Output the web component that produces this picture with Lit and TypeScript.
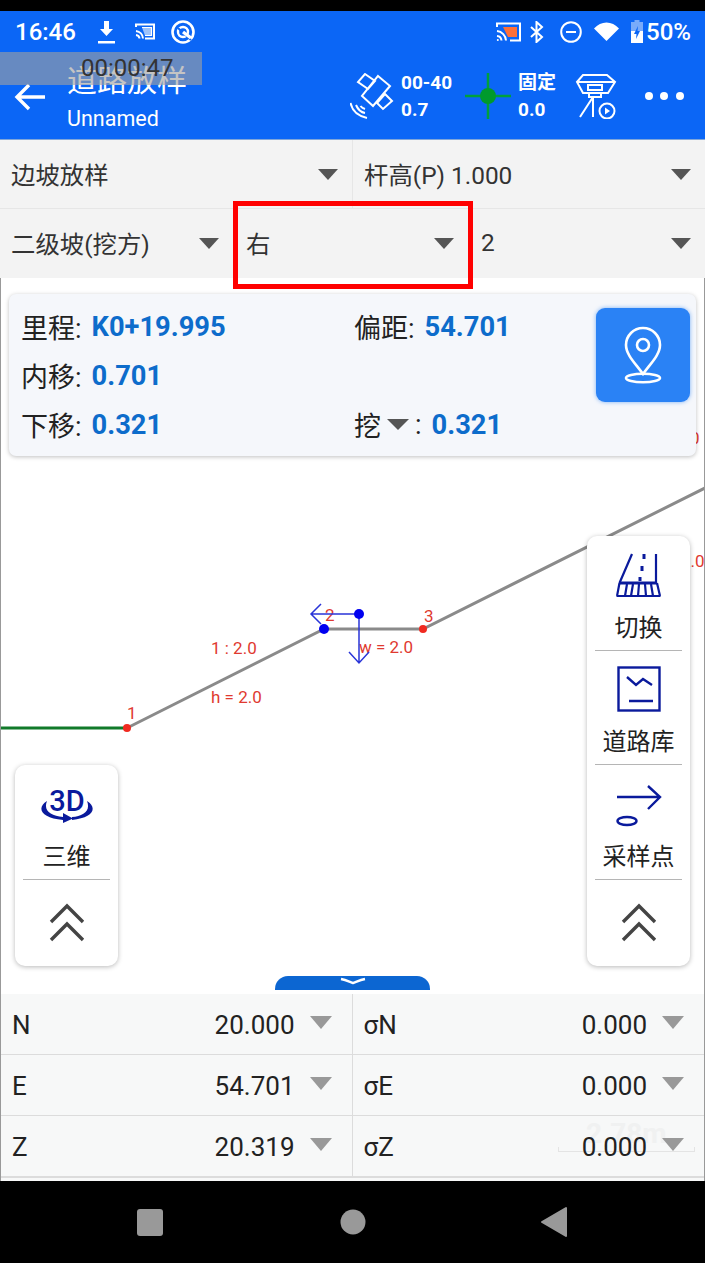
import { LitElement, css, html, svg } from 'lit';
import { customElement } from 'lit/decorators.js';

const caret = html`<span class="caret"></span>`;

const chevrons = html`<svg class="chevrons" width="36" height="40" viewBox="0 0 36 40">
  <path d="M2 19 18 3l16 16M2 37l16-16 16 16" fill="none" stroke="#444" stroke-width="3.4" />
</svg>`;

const roadIcon = html`<svg width="46" height="46" viewBox="0 0 46 46" fill="none" stroke="#0a1a9c" stroke-width="2.2">
  <path d="M16 2 3.500 31M40 2v29" />
  <path d="M28 2v5M26 14v5M24 25v4" stroke-width="3" />
  <path d="M3 31h38" stroke-width="3" />
  <path d="M1 44 3.500 31M41 31l3 13M.5 44h44" />
  <path d="M11 32 9 44M17 32l-2 12M23 32l-1 12M29 32l1 12M35 32l2 12" />
</svg>`;

const libIcon = html`<svg width="44" height="46" viewBox="0 0 44 46" fill="none" stroke="#0a1a9c" stroke-width="2.4">
  <rect x="1.500" y="1.500" width="41" height="43" />
  <path d="M10 11l9 8 7-6 9 6M12 35h24" />
</svg>`;

const sampleIcon = html`<svg width="46" height="42" viewBox="0 0 46 42" fill="none" stroke="#0a1a9c" stroke-width="2.4">
  <path d="M1 12h43M32 1l12 11-12 12" />
  <ellipse cx="11" cy="36" rx="9.500" ry="4" />
</svg>`;

const threeDIcon = html`<svg width="56" height="40" viewBox="0 0 56 40">
  <text x="28" y="24" text-anchor="middle" class="three-d">3D</text>
  <path d="M8 14C-3 21 2 31 24 33l0-3C12 29 4 24 8 14z" fill="#0a1a9c" />
  <path d="M48 14c11 7 6 17-15 19l0-3c11-1 19-6 15-16z" fill="#0a1a9c" />
  <path d="M24 26l10 5.500L24 36z" fill="#0a1a9c" />
</svg>`;

@customElement('app-root')
export class AppRoot extends LitElement {
  static styles = css`
    :host {
      display: block;
      width: 705px;
      height: 1263px;
      background: #000;
      font-family: Roboto, 'Noto Sans CJK SC', sans-serif;
      color: #222;
    }

    .page {
      position: relative;
      width: 705px;
      height: 1263px;
      display: flex;
      flex-direction: column;
      overflow: hidden;
    }

    .black-top {
      height: 11px;
      background: #000;
    }

    .header {
      height: 128px;
      background: #0b66f6;
      border-bottom: 1px solid #7fa6da;
      color: #fff;
    }

    .status {
      height: 41px;
      display: flex;
      align-items: center;
      padding: 0 14px 0 15px;
    }

    .status svg {
      display: block;
    }

    .time {
      font-size: 24px;
      font-weight: 500;
      width: 61px;
    }

    .s-dl {
      margin-left: 22px;
    }
    .s-cast {
      margin-left: 20px;
    }
    .s-ring {
      margin-left: 16px;
    }
    .s-right {
      margin-left: auto;
    }
    .s-bt {
      margin-left: 9px;
    }
    .s-dnd {
      margin-left: 16px;
    }
    .s-wifi {
      margin-left: 12px;
    }
    .s-batt {
      margin-left: 12px;
    }
    .pct {
      margin-left: 3px;
      font-size: 24px;
      font-weight: 500;
    }

    .appbar {
      height: 87px;
      display: flex;
      align-items: center;
      padding-left: 14px;
    }

    .back {
      display: block;
      margin-top: 2px;
    }

    .titles {
      flex: 1;
      margin-left: 22px;
      margin-top: 4px;
    }

    .title {
      font-size: 30px;
      line-height: 36px;
      height: 36px;
    }

    .subtitle {
      font-size: 21.500px;
      line-height: 28px;
      margin-top: 6px;
    }

    .sat {
      margin-right: 6px;
      display: block;
    }

    .fix-text {
      font-size: 19px;
      font-weight: 700;
      line-height: 27px;
      width: 51px;
      white-space: nowrap;
    }

    .cross {
      display: block;
      margin: 0 7px 0 13px;
    }

    .fix-text.narrow {
      width: 39px;
    }

    .receiver {
      display: block;
      margin-left: 18px;
    }

    .dots {
      display: block;
      margin: 0 21px 0 27px;
    }

    .row {
      display: flex;
      height: 68px;
      background: #f3f3f3;
      font-size: 24.400px;
      color: #333;
    }

    .row + .row {
      height: 69px;
      border-top: 1px solid #e6e6e6;
    }

    .cell {
      flex: 1;
      display: flex;
      align-items: center;
      justify-content: space-between;
      padding: 0 14px 0 11px;
      box-sizing: border-box;
      white-space: nowrap;
    }

    .cell > span:first-child {
      position: relative;
      top: -1px;
    }

    .cell.split {
      border-right: 1px solid #e6e6e6;
    }

    .row.thirds .cell {
      flex: none;
      width: 235px;
      padding-left: 13px;
    }

    .row.thirds .cell:first-child {
      width: 233px;
      padding-left: 11px;
    }

    .row.thirds .cell:last-child {
      width: 237px;
      padding-left: 13px;
    }

    .caret {
      width: 0;
      height: 0;
      border-left: 10px solid transparent;
      border-right: 10px solid transparent;
      border-top: 11px solid #555;
      flex: none;
    }

    .main {
      position: relative;
      flex: 1;
      background: #fff;
      border-left: 1px solid #999;
      border-right: 1px solid #999;
      overflow: hidden;
    }

    .canvas {
      position: absolute;
      left: -1px;
      top: 0;
    }

    .canvas text {
      font-family: Roboto, sans-serif;
      fill: #e03a30;
      font-size: 17px;
    }

    .card {
      position: relative;
      margin: 16px 8px 0;
      height: 162px;
      background: #f5f7fb;
      border-radius: 7px;
      box-shadow: 0 1px 4px rgba(0, 0, 0, 0.25);
      box-sizing: border-box;
      padding: 8px 0 0 12px;
      display: grid;
      grid-template-columns: 333px 1fr;
      grid-auto-rows: 49px;
      align-items: center;
      font-size: 27px;
      color: #222;
    }

    .kv {
      display: flex;
      align-items: center;
      white-space: nowrap;
    }

    .kv b {
      margin-left: 10px;
      color: #0d6ccb;
      font-weight: 700;
      font-size: 27.300px;
    }

    .kv .mini {
      margin: 0 6px;
      border-left-width: 11px;
      border-right-width: 11px;
    }

    .locate {
      position: absolute;
      right: 6px;
      top: 14px;
      width: 94px;
      height: 94px;
      background: #2a82f5;
      border-radius: 9px;
      box-shadow: 0 0 4px rgba(42, 130, 245, 0.6);
      display: flex;
      align-items: center;
      justify-content: center;
    }

    .panel {
      position: absolute;
      width: 103px;
      background: #fff;
      border-radius: 10px;
      box-shadow: 0 1px 5px rgba(0, 0, 0, 0.28);
      box-sizing: border-box;
      padding: 0 8px;
      display: flex;
      flex-direction: column;
    }

    .panel.right {
      left: 586px;
      top: 258px;
      height: 430px;
    }

    .panel.left {
      left: 14px;
      top: 487px;
      height: 201px;
    }

    .tool {
      height: 114.500px;
      border-bottom: 1px solid #b5b5b5;
      box-sizing: border-box;
      display: flex;
      flex-direction: column;
      align-items: center;
      justify-content: flex-end;
      font-size: 24px;
      line-height: 32px;
      color: #222;
      padding-bottom: 6px;
      gap: 14px;
    }

    .tool svg {
      display: block;
    }

    .three-d {
      font-family: Roboto, sans-serif;
      font-size: 29px;
      font-weight: 500;
      fill: #0a1a9c;
    }

    .more {
      flex: 1;
      display: flex;
      align-items: center;
      justify-content: center;
    }

    .tab {
      position: absolute;
      left: 274px;
      bottom: 4px;
      width: 155px;
      height: 14px;
      background: #0c66d2;
      border-radius: 13px 13px 0 0;
      display: flex;
      justify-content: center;
    }

    .table {
      position: relative;
      height: 187px;
      background: #f7f8f8;
      border-left: 1px solid #999;
      border-right: 1px solid #999;
      font-size: 26px;
      color: #222;
    }

    .t-row {
      position: relative;
      height: 60px;
      display: flex;
      border-bottom: 1px solid #dcdcdc;
    }

    .t-row:last-of-type {
      border-bottom-width: 2px;
    }

    .t-cell {
      width: 352px;
      display: flex;
      align-items: center;
      box-sizing: border-box;
      padding: 2px 0 0 11px;
    }

    .t-cell:first-child {
      width: 352px;
      border-right: 1px solid #dcdcdc;
    }

    .t-cell .val {
      margin-left: auto;
    }

    .t-cell .caret {
      margin: 0 20px 0 15px;
      border-left-width: 11px;
      border-right-width: 11px;
      border-top: 13px solid #999;
      position: relative;
      top: -3px;
    }

    .scale {
      position: absolute;
      left: 557px;
      top: 153px;
      width: 137px;
      height: 5px;
      border: 1px solid #e4e4e4;
      border-top: none;
      box-sizing: border-box;
    }

    .scale span {
      position: absolute;
      left: 27px;
      bottom: 2px;
      font-size: 28px;
      font-weight: 700;
      line-height: 30px;
      color: #f0f1f1;
    }

    .nav {
      height: 82px;
      background: #000;
      display: block;
    }

    .record {
      position: absolute;
      left: 0;
      top: 52px;
      width: 202px;
      height: 33px;
      background: rgba(160, 160, 160, 0.62);
      color: #333;
      font-size: 24px;
      line-height: 32px;
      box-sizing: border-box;
      padding-left: 81px;
    }

    .highlight {
      position: absolute;
      left: 233px;
      top: 201px;
      width: 240px;
      height: 88px;
      border: 5px solid #f00;
      box-sizing: border-box;
    }
  `;

  private dropdown(label: string, extra = '') {
    return html`<div class="cell ${extra}"><span>${label}</span>${caret}</div>`;
  }

  private tableRow(a: string, av: string, b: string, bv: string) {
    return html`<div class="t-row">
      <div class="t-cell"><span>${a}</span><span class="val">${av}</span>${caret}</div>
      <div class="t-cell"><span>${b}</span><span class="val">${bv}</span>${caret}</div>
    </div>`;
  }

  private renderStatus() {
    return html`<div class="status">
      <span class="time">16:46</span>
      <svg class="s-dl" width="17" height="24" viewBox="0 0 17 24" fill="#fff">
        <path d="M6 1h5v8h4l-6.500 7L2 9h4zM0 21h17v2.500H0z" />
      </svg>
      <svg class="s-cast" width="20" height="17" viewBox="0 0 20 17" fill="none" stroke="#fff" stroke-width="2">
        <path d="M1 4V1.500h18v14h-9" />
        <path d="M1 8a8 8 0 0 1 7 7.500M1 12a4 4 0 0 1 3.500 3.500" />
        <path d="M7 4.500h9.500v8H10" stroke-width="1.200" fill="#fff" fill-opacity=".6" />
      </svg>
      <svg class="s-ring" width="24" height="24" viewBox="0 0 24 24" fill="none" stroke="#fff">
        <circle cx="12" cy="12" r="10.500" stroke-width="2.600" />
        <circle cx="12" cy="12" r="5" stroke-width="2.400" />
        <path d="M7 8l13 12" stroke="#0b66f6" stroke-width="2" />
        <path d="M12 12l8 6" stroke-width="3.400" />
      </svg>
      <svg class="s-right" width="25" height="20" viewBox="0 0 25 20" fill="none" stroke="#fff" stroke-width="2">
        <path d="M7 5h14v10h-9z" fill="#ff7038" stroke="none" />
        <path d="M1 5V1.500h23v17h-10" />
        <path d="M1 9a10 10 0 0 1 9 9.500M1 14a5 5 0 0 1 4.500 4.500" />
        <circle cx="1.800" cy="18" r="1" fill="#fff" stroke="none" />
      </svg>
      <svg class="s-bt" width="14" height="22" viewBox="0 0 14 22" fill="none" stroke="#fff" stroke-width="2">
        <path d="M1 6l11 10-5.500 5V1L12 6 1 16" />
      </svg>
      <svg class="s-dnd" width="22" height="22" viewBox="0 0 22 22" fill="none" stroke="#fff" stroke-width="2">
        <circle cx="11" cy="11" r="9.800" />
        <path d="M6 11h10" />
      </svg>
      <svg class="s-wifi" width="25" height="19" viewBox="0 0 25 19" fill="#fff">
        <path d="M0 6.500C7-1.500 18-1.500 25 6.500L12.500 19z" />
      </svg>
      <svg class="s-batt" width="12" height="23" viewBox="0 0 12 23">
        <path d="M3.500 0h5v2H12v21H0V2h3.500z" fill="#fff" fill-opacity=".45" />
        <path d="M0 11h12v12H0z" fill="#fff" />
        <path d="M7 6 3 14h2.500L5 19l4-8H6.500z" fill="#0b66f6" />
      </svg>
      <span class="pct">50%</span>
    </div>`;
  }

  private renderAppbar() {
    return html`<div class="appbar">
      <svg class="back" width="31" height="28" viewBox="0 0 31 28" fill="none" stroke="#fff" stroke-width="3.400">
        <path d="M31 14H3M15 2 3 14l12 12" />
      </svg>
      <div class="titles">
        <div class="title">道路放样</div>
        <div class="subtitle">Unnamed</div>
      </div>
      <svg class="sat" width="45" height="46" viewBox="0 0 45 46" fill="none" stroke="#fff" stroke-width="2">
        <path d="M15 1l10 7-7 8-10-7zM28 3l12 10-17 20-11-10zM35 21l7 7-9 8-6-6z" />
        <path d="M.5 30Q3 42 17 45M6 32q3 7 9 8M10.500 33q1.500 2 4.500 3" />
      </svg>
      <div class="fix-text">00-40<br />0.7</div>
      <svg class="cross" width="46" height="46" viewBox="0 0 46 46">
        <path d="M23 0v46M0 23h46" stroke="#00a03c" stroke-width="2.500" />
        <circle cx="23" cy="23" r="8" fill="#009a2c" />
      </svg>
      <div class="fix-text narrow">固定<br />0.0</div>
      <svg class="receiver" width="42" height="46" viewBox="0 0 42 46" fill="none" stroke="#fff" stroke-width="2">
        <path d="M8 2h24l8 7-7 11H8L2 9zM2 9h38" />
        <rect x="13" y="12" width="14" height="5" />
        <path d="M14 20v4h12v-4M18 24 5 44M18 24v20" />
        <circle cx="32" cy="38" r="7.500" />
        <path d="M30 34.500v7l5-3.500z" fill="#fff" stroke="none" />
      </svg>
      <svg class="dots" width="40" height="10" viewBox="0 0 40 10" fill="#fff">
        <circle cx="5" cy="5" r="4" />
        <circle cx="20" cy="5" r="4" />
        <circle cx="36" cy="5" r="4" />
      </svg>
    </div>`;
  }

  private renderCanvas() {
    return svg`<svg class="canvas" width="705" height="716" viewBox="0 278 705 716" fill="none">
      <path d="M0 728h127" stroke="#117a2a" stroke-width="3" />
      <path d="M127 728 324 629H423L705 488" stroke="#8a8a8a" stroke-width="3" />
      <circle cx="127" cy="728" r="4" fill="#f02a20" />
      <circle cx="423" cy="629" r="4" fill="#f02a20" />
      <text x="127" y="719">1</text>
      <text x="325" y="621">2</text>
      <text x="424" y="622">3</text>
      <text x="211" y="654">1 : 2.0</text>
      <text x="211" y="703">h = 2.0</text>
      <text x="359" y="653">w = 2.0</text>
      <text x="690" y="444">0</text>
      <text x="681" y="567">2.0</text>
      <path d="M359 614H311M321 604 311 614l10 10M359 614V663M349 652l10 11 10-11" stroke="#2a35d8" stroke-width="1.500" />
      <circle cx="324" cy="629" r="5" fill="#0000f0" />
      <circle cx="359" cy="614" r="5" fill="#0000f0" />
    </svg>`;
  }

  render() {
    return html`<div class="page">
      <div class="black-top"></div>
      <div class="header">${this.renderStatus()} ${this.renderAppbar()}</div>

      <div class="row">
        ${this.dropdown('边坡放样', 'split')} ${this.dropdown('杆高(P) 1.000')}
      </div>
      <div class="row thirds">
        ${this.dropdown('二级坡(挖方)')} ${this.dropdown('右')} ${this.dropdown('2')}
      </div>

      <div class="main">
        ${this.renderCanvas()}
        <div class="card">
          <div class="kv">里程:<b>K0+19.995</b></div>
          <div class="kv">偏距:<b>54.701</b></div>
          <div class="kv">内移:<b>0.701</b></div>
          <div></div>
          <div class="kv">下移:<b>0.321</b></div>
          <div class="kv">挖<span class="caret mini"></span>:<b>0.321</b></div>
          <div class="locate">
            <svg width="40" height="58" viewBox="0 0 40 58" fill="none" stroke="#fff" stroke-width="2.600">
              <path d="M20 48C13 38 3 29 3 19a17 17 0 0 1 34 0c0 10-10 19-17 29z" />
              <circle cx="20" cy="19" r="6" />
              <ellipse cx="20" cy="52" rx="17" ry="4.200" />
            </svg>
          </div>
        </div>

        <div class="panel right">
          <div class="tool">${roadIcon}<span>切换</span></div>
          <div class="tool">${libIcon}<span>道路库</span></div>
          <div class="tool">${sampleIcon}<span>采样点</span></div>
          <div class="more">${chevrons}</div>
        </div>

        <div class="panel left">
          <div class="tool">${threeDIcon}<span>三维</span></div>
          <div class="more">${chevrons}</div>
        </div>

        <div class="tab">
          <svg width="28" height="9" viewBox="0 0 28 9" fill="none" stroke="#fff" stroke-width="2.400">
            <path d="M2 3c5 1 9 3 12 4 3-1 7-3 12-4" />
          </svg>
        </div>
      </div>

      <div class="table">
        <div class="scale"><span>2.78m</span></div>
        ${this.tableRow('N', '20.000', 'σN', '0.000')}
        ${this.tableRow('E', '54.701', 'σE', '0.000')}
        ${this.tableRow('Z', '20.319', 'σZ', '0.000')}
      </div>

      <svg class="nav" width="705" height="82" viewBox="0 0 705 82" fill="#999">
        <rect x="137" y="28" width="26" height="27" rx="3" />
        <circle cx="353" cy="41" r="12.500" />
        <path d="M566 27v28l-24-14z" stroke="#999" stroke-width="2" stroke-linejoin="round" />
      </svg>

      <div class="record">00:00:47</div>
      <div class="highlight"></div>
    </div>`;
  }
}
